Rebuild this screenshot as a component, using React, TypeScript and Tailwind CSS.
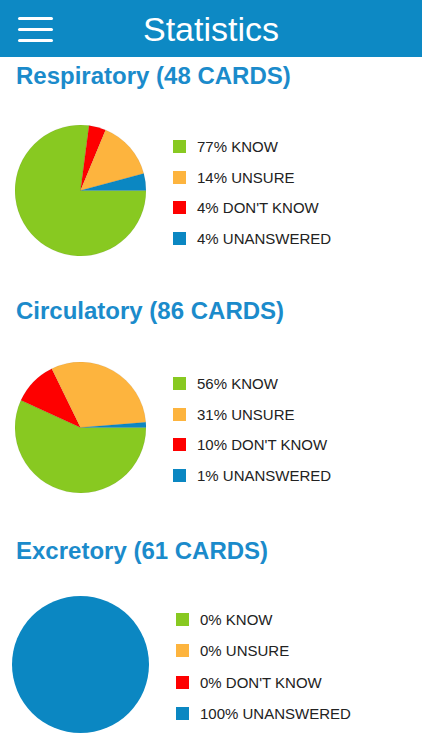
import React from 'react';

type Slice = { color: string; deg: number };

type Legend = { color: string; label: string };

const COLORS = {
  know: '#88c921',
  unsure: '#fdb43e',
  dontKnow: '#fe0000',
  unanswered: '#0b87c2',
};

const sections = [
  {
    title: 'Respiratory (48 CARDS)',
    // pie drawn clockwise from 3 o'clock: know, don't know, unsure, unanswered
    slices: [
      { color: COLORS.know, deg: 277.5 },
      { color: COLORS.dontKnow, deg: 15 },
      { color: COLORS.unsure, deg: 52.5 },
      { color: COLORS.unanswered, deg: 15 },
    ],
    legend: ['77% KNOW', '14% UNSURE', "4% DON'T KNOW", '4% UNANSWERED'],
  },
  {
    title: 'Circulatory (86 CARDS)',
    slices: [
      { color: COLORS.know, deg: 204.5 },
      { color: COLORS.dontKnow, deg: 39.5 },
      { color: COLORS.unsure, deg: 111.5 },
      { color: COLORS.unanswered, deg: 4.5 },
    ],
    legend: ['56% KNOW', '31% UNSURE', "10% DON'T KNOW", '1% UNANSWERED'],
  },
  {
    title: 'Excretory (61 CARDS)',
    slices: [{ color: COLORS.unanswered, deg: 360 }],
    legend: ['0% KNOW', '0% UNSURE', "0% DON'T KNOW", '100% UNANSWERED'],
  },
];

const legendColors = [COLORS.know, COLORS.unsure, COLORS.dontKnow, COLORS.unanswered];

const Pie: React.FC<{ slices: Slice[]; size: number }> = ({ slices, size }) => {
  const r = size / 2;
  const c = size / 2;
  let start = 0;

  if (slices.length === 1) {
    return (
      <svg width={size} height={size} viewBox={`0 0 ${size} ${size}`}>
        <circle cx={c} cy={c} r={r} fill={slices[0].color} />
      </svg>
    );
  }

  return (
    <svg width={size} height={size} viewBox={`0 0 ${size} ${size}`}>
      {slices.map((s, i) => {
        const a0 = (start * Math.PI) / 180;
        const a1 = ((start + s.deg) * Math.PI) / 180;
        start += s.deg;
        const x0 = c + r * Math.cos(a0);
        const y0 = c + r * Math.sin(a0);
        const x1 = c + r * Math.cos(a1);
        const y1 = c + r * Math.sin(a1);
        const large = s.deg > 180 ? 1 : 0;
        return (
          <path
            key={i}
            d={`M${c} ${c} L${x0} ${y0} A${r} ${r} 0 ${large} 1 ${x1} ${y1} Z`}
            fill={s.color}
            stroke="rgba(0,0,0,0.12)"
            strokeWidth={0.5}
          />
        );
      })}
    </svg>
  );
};

const LegendList: React.FC<{ items: Legend[]; rowClass: string }> = ({ items, rowClass }) => (
  <div className="flex flex-col">
    {items.map((it) => (
      <div key={it.label} className={`flex items-center ${rowClass}`}>
        <span className="w-[13px] h-[13px] shrink-0" style={{ backgroundColor: it.color }} />
        <span className="ml-[11px] text-[15px] leading-none text-[#222222]">{it.label}</span>
      </div>
    ))}
  </div>
);

const App: React.FC = () => {
  return (
    <div
      className="w-[422px] h-[750px] overflow-hidden bg-white"
      style={{ fontFamily: '"Liberation Sans", Arial, sans-serif' }}
    >
      <header className="h-[57px] bg-[#0d89c4] flex items-center relative">
        <div className="absolute left-[18px] top-[17px] flex flex-col gap-[8px]">
          <span className="block w-[35px] h-[3px] rounded-full bg-white" />
          <span className="block w-[35px] h-[3px] rounded-full bg-white" />
          <span className="block w-[35px] h-[3px] rounded-full bg-white" />
        </div>
        <h1 className="w-full text-center text-white text-[34px] leading-none">Statistics</h1>
      </header>

      {/* Respiratory */}
      <section className="flex flex-col">
        <h2 className="mt-[5px] pl-[16px] text-[24px] leading-[28px] font-bold text-[#1b8bcb]">
          {sections[0].title}
        </h2>
        <div className="mt-[35px] flex items-center">
          <div className="ml-[15px]">
            <Pie slices={sections[0].slices} size={131} />
          </div>
          <div className="ml-[27px] mt-[4px]">
            <LegendList
              items={sections[0].legend.map((l, i) => ({ label: l, color: legendColors[i] }))}
              rowClass="h-[30.5px]"
            />
          </div>
        </div>
      </section>

      {/* Circulatory */}
      <section className="flex flex-col">
        <h2 className="mt-[41px] pl-[16px] text-[24px] leading-[28px] font-bold text-[#1b8bcb]">
          {sections[1].title}
        </h2>
        <div className="mt-[37px] flex items-center">
          <div className="ml-[15px]">
            <Pie slices={sections[1].slices} size={131} />
          </div>
          <div className="ml-[27px] mt-[4px]">
            <LegendList
              items={sections[1].legend.map((l, i) => ({ label: l, color: legendColors[i] }))}
              rowClass="h-[30.5px]"
            />
          </div>
        </div>
      </section>

      {/* Excretory */}
      <section className="flex flex-col">
        <h2 className="mt-[44px] pl-[16px] text-[24px] leading-[28px] font-bold text-[#1b8bcb]">
          {sections[2].title}
        </h2>
        <div className="mt-[31px] flex items-center">
          <div className="ml-[12px]">
            <Pie slices={sections[2].slices} size={137} />
          </div>
          <div className="ml-[27px] mt-[4px]">
            <LegendList
              items={sections[2].legend.map((l, i) => ({ label: l, color: legendColors[i] }))}
              rowClass="h-[31.3px]"
            />
          </div>
        </div>
      </section>
    </div>
  );
};

export default App;
